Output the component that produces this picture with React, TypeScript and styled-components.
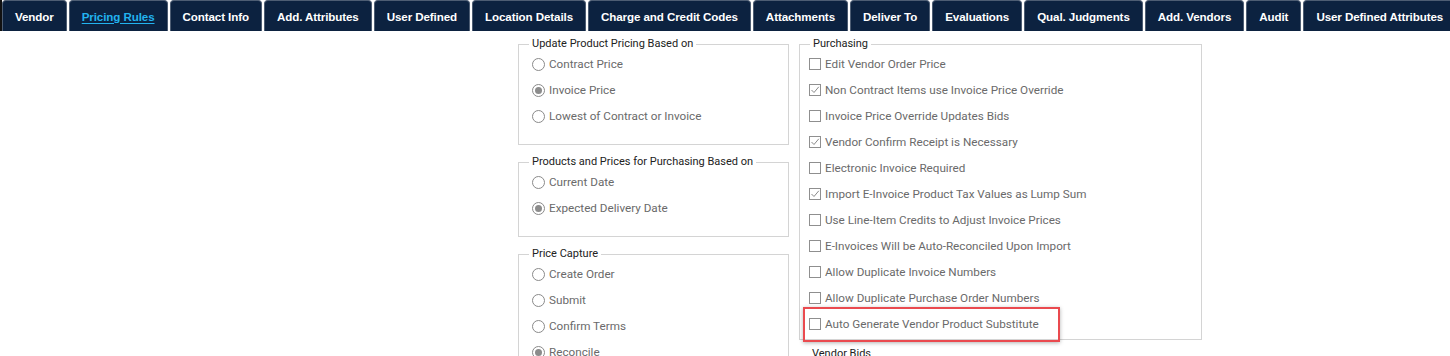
import styled, { createGlobalStyle } from "styled-components";

const GlobalStyle = createGlobalStyle`
    body {
        margin: 0;
        background: #ffffff;
        font-family: Roboto, "Noto Sans", sans-serif;
        overflow: hidden;
    }
`;

const TabBar = styled.div`
    display: flex;
    gap: 2px;
    height: 31px;
    border-left: 2px solid #111;
    white-space: nowrap;
`;

interface TabProps {
    Active?: boolean;
}

const Tab = styled.div<TabProps>`
    display: flex;
    align-items: center;
    flex: none;
    height: 31px;
    box-sizing: border-box;
    padding: 0 12px;
    background: #0c2240;
    border: 1px solid #4d5d73;
    border-bottom: none;
    border-radius: 4px 4px 0 0;
    font-family: "Liberation Sans", Arial, sans-serif;
    font-weight: bold;
    font-size: 11.6px;
    letter-spacing: -0.1px;
    color: ${props => props.Active ? "#22b3ef" : "#ffffff"};
    text-decoration: ${props => props.Active ? "underline" : "none"};
    text-underline-offset: 2px;
`;

const Content = styled.div`
    display: grid;
    grid-template-columns: 271px 403px;
    column-gap: 10px;
    margin-left: 518px;
    padding-top: 6px;
`;

interface ColumnProps {
    Gap: number;
}

const Column = styled.div<ColumnProps>`
    display: flex;
    flex-direction: column;
    gap: ${props => props.Gap}px;
`;

interface FieldsetProps {
    Bottom: number;
}

const Fieldset = styled.fieldset<FieldsetProps>`
    margin: 0;
    padding: 0 10px ${props => props.Bottom}px 13px;
    border: 1px solid #d4d4d4;
    min-width: 0;
`;

const Legend = styled.legend`
    padding: 0 3px;
    margin-left: -3px;
    font-size: 11px;
    line-height: 14px;
    color: #222;
`;

const Row = styled.label`
    position: relative;
    display: flex;
    align-items: center;
    gap: 4px;
    height: 26px;
    font-size: 11.7px;
    color: #6a6a6a;
`;

const Highlight = styled.span`
    position: absolute;
    left: -6px;
    top: -4px;
    width: 257px;
    height: 35px;
    box-sizing: border-box;
    border: 2px solid #ea4a4f;
    box-shadow: 0 1px 4px rgba(0, 0, 0, 0.3);
    pointer-events: none;
`;

interface MarkProps {
    Checked?: boolean;
}

const Radio = styled.span<MarkProps>`
    display: inline-flex;
    align-items: center;
    justify-content: center;
    width: 13px;
    height: 13px;
    box-sizing: border-box;
    border-radius: 50%;
    border: 1px solid #8a8a8a;
    background: #fff;
    flex: none;
    &::after {
        content: "";
        display: ${props => props.Checked ? "block" : "none"};
        width: 7px;
        height: 7px;
        border-radius: 50%;
        background: #8c8c8c;
    }
`;

const Box = styled.span`
    display: inline-flex;
    align-items: center;
    justify-content: center;
    width: 12px;
    height: 12px;
    box-sizing: border-box;
    border: 1px solid #8f8f8f;
    background: #fff;
    flex: none;
`;

const BoxRow = styled(Row)`
    margin-left: -4px;
`;

const BottomFieldset = styled.fieldset`
    margin: 0;
    padding: 0 10px 20px 13px;
    border: none;
`;

const tabs = [
    "Vendor", "Pricing Rules", "Contact Info", "Add. Attributes", "User Defined",
    "Location Details", "Charge and Credit Codes", "Attachments", "Deliver To",
    "Evaluations", "Qual. Judgments", "Add. Vendors", "Audit", "User Defined Attributes",
];

const radioGroups = [
    {
        Title: "Update Product Pricing Based on",
        Items: ["Contract Price", "Invoice Price", "Lowest of Contract or Invoice"],
        Selected: 1,
    },
    {
        Title: "Products and Prices for Purchasing Based on",
        Items: ["Current Date", "Expected Delivery Date"],
        Selected: 1,
    },
    {
        Title: "Price Capture",
        Items: ["Create Order", "Submit", "Confirm Terms", "Reconcile"],
        Selected: 3,
    },
];

const purchasing = [
    { Text: "Edit Vendor Order Price", Checked: false },
    { Text: "Non Contract Items use Invoice Price Override", Checked: true },
    { Text: "Invoice Price Override Updates Bids", Checked: false },
    { Text: "Vendor Confirm Receipt is Necessary", Checked: true },
    { Text: "Electronic Invoice Required", Checked: false },
    { Text: "Import E-Invoice Product Tax Values as Lump Sum", Checked: true },
    { Text: "Use Line-Item Credits to Adjust Invoice Prices", Checked: false },
    { Text: "E-Invoices Will be Auto-Reconciled Upon Import", Checked: false },
    { Text: "Allow Duplicate Invoice Numbers", Checked: false },
    { Text: "Allow Duplicate Purchase Order Numbers", Checked: false },
    { Text: "Auto Generate Vendor Product Substitute", Checked: false, Marked: true },
];

function Check() {
    return (
        <svg width="10" height="10" viewBox="0 0 10 10">
            <polyline points="1.5,5 4,7.5 8.8,1.8" fill="none" stroke="#8a8a8a" strokeWidth="1" />
        </svg>
    );
}

export default function App() {
    return (
        <>
            <GlobalStyle />
            <TabBar>
                {tabs.map(t => (
                    <Tab key={t} Active={t === "Pricing Rules"}>{t}</Tab>
                ))}
            </TabBar>
            <Content>
                <Column Gap={10}>
                    {radioGroups.map(g => (
                        <Fieldset key={g.Title} Bottom={15}>
                            <Legend>{g.Title}</Legend>
                            {g.Items.map((item, i) => (
                                <Row key={item}>
                                    <Radio Checked={i === g.Selected} />
                                    {item}
                                </Row>
                            ))}
                        </Fieldset>
                    ))}
                </Column>
                <Column Gap={7}>
                    <Fieldset Bottom={2}>
                        <Legend>Purchasing</Legend>
                        {purchasing.map(p => (
                            <BoxRow key={p.Text}>
                                <Box>{p.Checked && <Check />}</Box>
                                {p.Text}
                                {p.Marked && <Highlight />}
                            </BoxRow>
                        ))}
                    </Fieldset>
                    <BottomFieldset>
                        <Legend>Vendor Bids</Legend>
                    </BottomFieldset>
                </Column>
            </Content>
        </>
    );
}
